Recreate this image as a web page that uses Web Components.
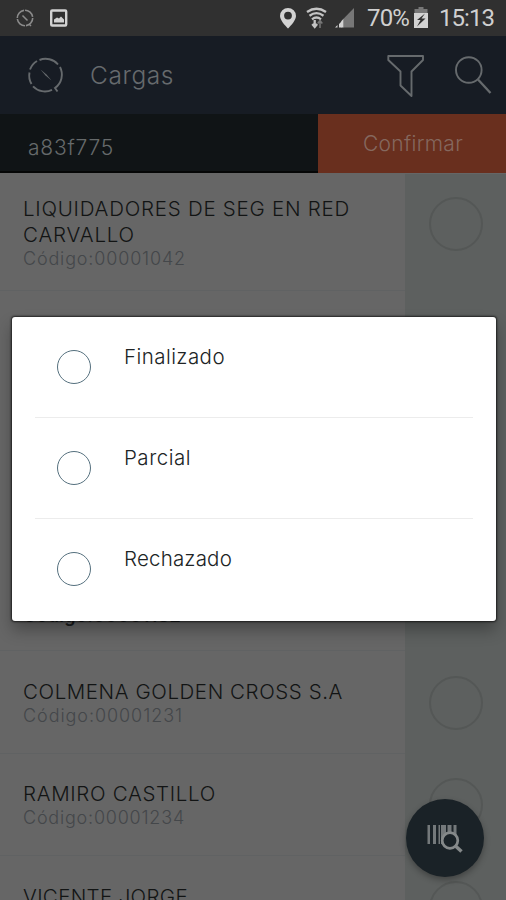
<!DOCTYPE html>
<html lang="es">
<head>
<meta charset="utf-8">
<meta name="viewport" content="width=device-width, initial-scale=1">
<title>Cargas</title>
<style>
    body {
        margin: 0;
        background: #666666;
        overflow: hidden;
    }
</style>
</head>
<body>
<cargas-app></cargas-app>

<script>
// One line of text, tracked so that it takes the given width
class TextLine extends HTMLElement {

    constructor() {
        super();
        this.shadow = this.attachShadow({ mode: 'open' });
    }

    connectedCallback() {
        this.shadow.innerHTML =
        /*html*/`
        <style>
            :host{
                display: block;
                white-space: nowrap;
            }
            span{
                display: inline-block;
            }
        </style>
        <span><slot></slot></span>
        `
        const span = this.shadow.querySelector("span");
        const width = Number(this.getAttribute("width"));
        if (width) {
            requestAnimationFrame(() => {
                const free = width - span.getBoundingClientRect().width;
                span.style.letterSpacing = (free / this.textContent.length) + "px";
            });
        }
    }
}

class StatusBar extends HTMLElement {

    constructor() {
        super();
        this.shadow = this.attachShadow({ mode: 'open' });
    }

    connectedCallback() {
        this.shadow.innerHTML =
        /*html*/`
        <style>
            :host{
                display: flex;
                justify-content: space-between;
                box-sizing: border-box;
                height: 36px;
                padding: 0 12px 0 16px;
                background: #303030;
                color: #d0d0d0;
                font: 24px/37px Roboto, sans-serif;
            }
            div{
                display: flex;
            }
            svg{
                display: block;
                flex: none;
            }
        </style>
        <div>
            <svg width="54" height="36" fill="none">
                <circle cx="9" cy="18" r="7.7" stroke="#8b8b8b" stroke-width="1.6" stroke-dasharray="11 1"/>
                <path d="M6.5 15.5l5 5M13 24l2 2" stroke="#8b8b8b" stroke-width="1.5"/>
                <rect x="35.2" y="10.5" width="15" height="15" rx="1" stroke="#d2d2d2" stroke-width="2.4"/>
                <path d="M38 22.5v-3l3-2 2 1 2-2 3 3v3z" fill="#d2d2d2"/>
            </svg>
        </div>
        <div>
            <svg width="88" height="36" viewBox="279 0 88 36">
                <path fill="#d2d2d2" fill-rule="evenodd" d="M288 8a8 8 0 0 0-8 8c0 5 8 12.500 8 12.500s8-7.500 8-12.500a8 8 0 0 0-8-8zm0 3.700a3.900 3.900 0 1 1 0 7.800 3.900 3.900 0 0 1 0-7.800z"/>
                <g fill="none" stroke="#c4c4c4" stroke-width="2.300">
                    <path d="M307 12q9.500-6.500 19 0M309.500 15.700q7-5 14 0M312 19.300q4.500-3.500 9 0"/>
                    <path d="M314.700 20v7M312.300 24l2.400 3 2.400-3"/>
                    <path d="M320 28v-7M317.700 23.500l2.300-3 2.300 3" stroke="#777" stroke-width="1.500"/>
                </g>
                <path d="M343.500 18.800L354 8v19.500h-10.500z" fill="#777"/>
                <path d="M335 27.500l2.500-2.500v2.500zM339 27.500V24l2.500-2.500v6z" fill="#d2d2d2"/>
                <path d="M341 21.500l2.500-2.700v8.700H341z" fill="#d2d2d2"/>
            </svg>
            <text-line width="42">70%</text-line>
            <svg width="30" height="36" viewBox="409 0 30 36">
                <path d="M418.500 7h5v2h4v4h-13V9h4z" fill="#777"/>
                <path d="M414 13h14v15h-14z" fill="#d2d2d2"/>
                <path d="M425 13.500l-8 6.500h3.500l-3.500 6.500 8.500-8h-4z" fill="#303030"/>
            </svg>
            <text-line width="55">15:13</text-line>
        </div>
        `
    }
}

class AppHeader extends HTMLElement {

    constructor() {
        super();
        this.shadow = this.attachShadow({ mode: 'open' });
    }

    connectedCallback() {
        this.shadow.innerHTML =
        /*html*/`
        <style>
            :host{
                display: flex;
                align-items: center;
                height: 78px;
                background: #171c24;
                color: #666a6d;
                font-size: 24.500px;
                line-height: 78px;
            }
            ::slotted(text-line){
                flex: 1;
            }
            svg{
                display: block;
                flex: none;
                fill: none;
                stroke: #666a6d;
            }
        </style>
        <svg width="90" height="78" viewBox="0 36 90 78" stroke-width="1.900">
            <path d="M39.500 60a16.400 16.400 0 0 1 18.500 4.500M60 67a16.400 16.400 0 0 1-5 21l2.500 3.500M52 89.800a16.400 16.400 0 0 1-19-3.500M31.500 84a16.400 16.400 0 0 1-2-11.500M30 69.500a16.400 16.400 0 0 1 7-8.500"/>
            <path d="M40.500 69.500l5 6 6 5-5-6z" fill="#666a6d" stroke="none"/>
        </svg>
        <slot></slot>
        <svg width="119" height="78" viewBox="387 36 119 78" stroke-width="1.900">
            <path d="M388.300 56h34.700v4l-11.500 11.500v24.500l-11-10.500V71.500L388.300 60z" stroke-linejoin="round"/>
            <circle cx="468.800" cy="70" r="12.800"/>
            <path d="M478 79.500l12.500 13.500" stroke-width="2.300"/>
        </svg>
        `
    }
}

class ConfirmBar extends HTMLElement {

    constructor() {
        super();
        this.shadow = this.attachShadow({ mode: 'open' });
    }

    connectedCallback() {
        this.shadow.innerHTML =
        /*html*/`
        <style>
            :host{
                display: flex;
                height: 59px;
                font-size: 21px;
            }
            .code{
                box-sizing: border-box;
                width: 318px;
                padding-left: 28px;
                background: #101416;
                border-bottom: 2px solid #050606;
                color: #666a6b;
                line-height: 67px;
            }
            .confirm{
                flex: 1;
                padding-left: 45px;
                background: #692f1e;
                color: #85685e;
                line-height: 60px;
            }
        </style>
        <div class="code"><slot></slot></div>
        <div class="confirm"><text-line width="100">Confirmar</text-line></div>
        `
    }

}

class LoadRow extends HTMLElement {

    constructor() {
        super();
        this.shadow = this.attachShadow({ mode: 'open' });
    }

    connectedCallback() {
        this.shadow.innerHTML =
        /*html*/`
        <style>
            :host{
                display: flex;
                height: var(--row-height, 102.700px);
            }
            .info{
                box-sizing: border-box;
                width: 405px;
                padding: var(--info-top, 27.500px) 0 0 23px;
                border-bottom: 1px solid #606263;
                color: #121414;
                font-size: 20.500px;
                line-height: 26px;
            }
            .code{
                color: #44474a;
                font-size: 18px;
                line-height: 22px;
            }
            :host([selected]) .code{
                color: #1c1e1f;
                font-weight: 600;
            }
            .check{
                flex: 1;
                padding: var(--check-top, 24.500px) 0 0 23.500px;
                background: #5d605f;
            }
            .circle{
                box-sizing: border-box;
                width: 54px;
                height: 54px;
                border: 2px solid #545756;
                border-radius: 50%;
            }
            :host([selected]) .circle{
                display: none;
            }
        </style>
        <div class="info">
            <slot></slot>
            <div class="code"><slot name="code"></slot></div>
        </div>
        <div class="check"><div class="circle"></div></div>
        `
    }
}

class StateOption extends HTMLElement {

    constructor() {
        super();
        this.shadow = this.attachShadow({ mode: 'open' });
    }

    connectedCallback() {
        this.shadow.innerHTML =
        /*html*/`
        <style>
            :host{
                display: flex;
                box-sizing: border-box;
                height: 101px;
                margin: 0 23px 0 23.500px;
                padding: 33px 0 0 21.700px;
                border-bottom: 1px solid #ececec;
                color: #202425;
                font-size: 20.500px;
            }
            :host(:last-child){
                border-bottom: none;
            }
            .radio{
                box-sizing: border-box;
                width: 34px;
                height: 34px;
                margin-right: 33.300px;
                border: 1.500px solid #55707e;
                border-radius: 50%;
            }
            .label{
                line-height: 26px;
                margin-top: -6px;
            }
        </style>
        <div class="radio"></div>
        <div class="label"><slot></slot></div>
        `
        this.addEventListener("click", (event) => {
            this.dispatchEvent(new CustomEvent("stateSelected", { bubbles: true, detail: this.textContent }));
        });
    }
}

class StateDialog extends HTMLElement {

    constructor() {
        super();
        this.shadow = this.attachShadow({ mode: 'open' });
    }

    connectedCallback() {
        this.shadow.innerHTML =
        /*html*/`
        <style>
            :host{
                display: block;
                box-sizing: border-box;
                position: absolute;
                z-index: 20;
                left: 11.500px;
                top: 317px;
                width: 484.500px;
                height: 304px;
                background: #ffffff;
                border-radius: 3px;
                box-shadow: 0 0 2px 1px rgba(0,0,0,.65), 0 9px 16px rgba(0,0,0,.3);
            }
        </style>
        <slot></slot>
        `
    }
}

class ScanButton extends HTMLElement {

    constructor() {
        super();
        this.shadow = this.attachShadow({ mode: 'open' });
    }

    connectedCallback() {
        this.shadow.innerHTML =
        /*html*/`
        <style>
            :host{
                display: block;
                position: absolute;
                z-index: 10;
                left: 406px;
                top: 799px;
                width: 78px;
                height: 78px;
                border-radius: 50%;
                background: #1a2227;
                box-shadow: 0 3px 6px rgba(0,0,0,.3);
            }
            svg{
                display: block;
            }
        </style>
        <svg width="78" height="78" viewBox="406 799 78 78">
            <path fill="#74797b" d="M427.500 825h2.500v19h-2.500zM433 825h3v19h-3zM438.500 825h1.500v19h-1.500zM441 825h5v19h-5zM447.500 825h4v8h-4zM453.500 825h3v10h-3z"/>
            <circle cx="450" cy="840.500" r="7.800" fill="#1a2227" stroke="#85898a" stroke-width="2.700"/>
            <path d="M455.500 846l6 5.500" stroke="#85898a" stroke-width="3.500"/>
        </svg>
        `
    }
}

class CargasApp extends HTMLElement {

    constructor() {
        super();
        this.shadow = this.attachShadow({ mode: 'open' });
    }

    connectedCallback() {
        this.shadow.innerHTML =
        /*html*/`
        <style>
            :host{
                display: block;
                position: relative;
                width: 506px;
                height: 900px;
                overflow: hidden;
                background: #666666;
                font-family: Inter, "Open Sans", sans-serif;
                font-weight: 350;
            }
            .list{
                display: flex;
                flex-direction: column;
                padding-top: 1px;
            }
            load-row{
                flex: none;
            }
            .first{
                --row-height: 117px;
                --info-top: 22px;
                --check-top: 23px;
            }
            .behind{
                --row-height: 360px;
                --info-top: 314px;
            }
        </style>
        <status-bar></status-bar>
        <app-header><text-line width="84">Cargas</text-line></app-header>
        <confirm-bar><text-line width="86">a83f775</text-line></confirm-bar>
        <div class="list">
            <load-row class="first">
                <text-line width="327">LIQUIDADORES DE SEG EN RED</text-line>
                <text-line width="112">CARVALLO</text-line>
                <text-line slot="code" width="163">Código:00001042</text-line>
            </load-row>
            <load-row class="behind" selected>
                <text-line slot="code" width="158">Código:00001182</text-line>
            </load-row>
            <load-row>
                <text-line width="320">COLMENA GOLDEN CROSS S.A</text-line>
                <text-line slot="code" width="160">Código:00001231</text-line>
            </load-row>
            <load-row>
                <text-line width="193">RAMIRO CASTILLO</text-line>
                <text-line slot="code" width="162">Código:00001234</text-line>
            </load-row>
            <load-row>
                <text-line width="165">VICENTE JORGE</text-line>
            </load-row>
        </div>
        <scan-button></scan-button>
        <state-dialog>
            <state-option><text-line width="101">Finalizado</text-line></state-option>
            <state-option><text-line width="67">Parcial</text-line></state-option>
            <state-option><text-line width="108">Rechazado</text-line></state-option>
        </state-dialog>
        `
    }
}

customElements.define('status-bar', StatusBar);
customElements.define('app-header', AppHeader);
customElements.define('confirm-bar', ConfirmBar);
customElements.define('load-row', LoadRow);
customElements.define('state-option', StateOption);
customElements.define('state-dialog', StateDialog);
customElements.define('scan-button', ScanButton);
customElements.define('text-line', TextLine);
customElements.define('cargas-app', CargasApp);
</script>
</body>
</html>
